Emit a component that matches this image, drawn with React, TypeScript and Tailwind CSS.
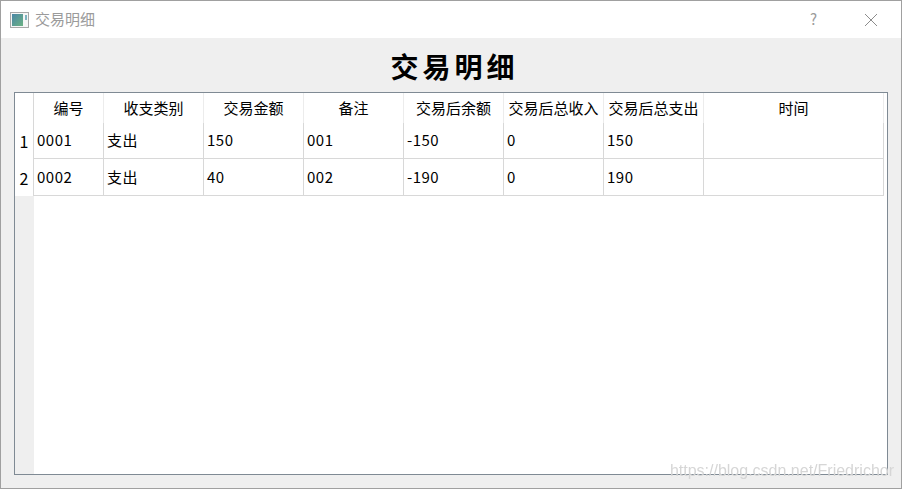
const COLUMNS = ['编号', '收支类别', '交易金额', '备注', '交易后余额', '交易后总收入', '交易后总支出', '时间']

// Column widths include the 1px grid line on the right
const COLUMN_CLASSES = [
  'w-[70px]',
  'w-[100px]',
  'w-[100px]',
  'w-[100px]',
  'w-[100px]',
  'w-[100px]',
  'w-[100px]',
  'w-[180px]',
]

const ROWS = [
  ['0001', '支出', '150', '001', '-150', '0', '150', ''],
  ['0002', '支出', '40', '002', '-190', '0', '190', ''],
]

function WindowIcon() {
  return (
    <svg width="19" height="16" viewBox="0 0 19 16" className="shrink-0">
      <defs>
        <linearGradient id="pane" x1="0" y1="0" x2="1" y2="1">
          <stop offset="0" stopColor="#4a86a6" />
          <stop offset="1" stopColor="#6cb283" />
        </linearGradient>
      </defs>
      <rect x="0.5" y="0.5" width="18" height="15" fill="#f6f6f6" stroke="#a8a8a8" />
      <rect x="2" y="2" width="11" height="12" fill="url(#pane)" />
      <rect x="15" y="3" width="2" height="5" fill="#7fb3c0" />
    </svg>
  )
}

export default function App() {
  return (
    <div className="flex flex-col w-[902px] h-[489px] bg-[#efefef] border border-[#a0a0a0] overflow-hidden relative font-['Noto_Sans_CJK_SC','Noto_Sans',sans-serif] text-black">
      <div className="flex items-center h-[37px] bg-white shrink-0 pl-[9px]">
        <WindowIcon />
        <span className="ml-[6px] text-[15px] text-[#9b9b9b]">交易明细</span>
        <span className="ml-auto mr-[47px] text-[15px] text-[#9b9b9b]">?</span>
        <svg width="14" height="14" viewBox="0 0 14 14" className="mr-[23px]">
          <path d="M1 1L13 13M13 1L1 13" stroke="#8c8c8c" strokeWidth="1" fill="none" />
        </svg>
      </div>

      <h1 className="h-[54px] shrink-0 flex items-center justify-center pt-[2px] pl-[7px] text-[28px] font-bold tracking-[4px] leading-none">
        交易明细
      </h1>

      <div className="flex flex-1 mx-[13px] mb-[13px] border border-[#7f8a94] bg-white">
        <div className="flex flex-col w-[19px] shrink-0">
          <div className="h-[30px] bg-white border-r border-[#d8d8d8]" />
          {ROWS.map((_, i) => (
            <div
              key={i}
              className={`flex items-center justify-center border-r border-[#d8d8d8] text-[16px] ${i === 0 ? 'h-[36px]' : 'h-[37px]'}`}
            >
              {i + 1}
            </div>
          ))}
          <div className="flex-1 bg-[#efefef]" />
        </div>

        <div className="flex flex-col">
          <div className="flex h-[30px]">
            {COLUMNS.map((name, c) => (
              <div
                key={name}
                className={`${COLUMN_CLASSES[c]} flex items-center justify-center border-r border-[#ececec] text-[15px] whitespace-nowrap`}
              >
                {name}
              </div>
            ))}
          </div>
          {ROWS.map((row, i) => (
            <div key={i} className={`flex border-b border-[#d8d8d8] ${i === 0 ? 'h-[36px]' : 'h-[37px]'}`}>
              {row.map((value, c) => (
                <div
                  key={c}
                  className={`${COLUMN_CLASSES[c]} flex items-center pl-[3px] border-r border-[#d8d8d8] text-[15px] tracking-[0.5px]`}
                >
                  {value}
                </div>
              ))}
            </div>
          ))}
        </div>
      </div>

      <span className="absolute right-[7px] bottom-[9px] text-[16px] leading-none text-[#d6d6d6] blur-[0.4px] font-['Liberation_Sans',sans-serif]">
        https://blog.csdn.net/Friedrichor
      </span>
    </div>
  )
}
